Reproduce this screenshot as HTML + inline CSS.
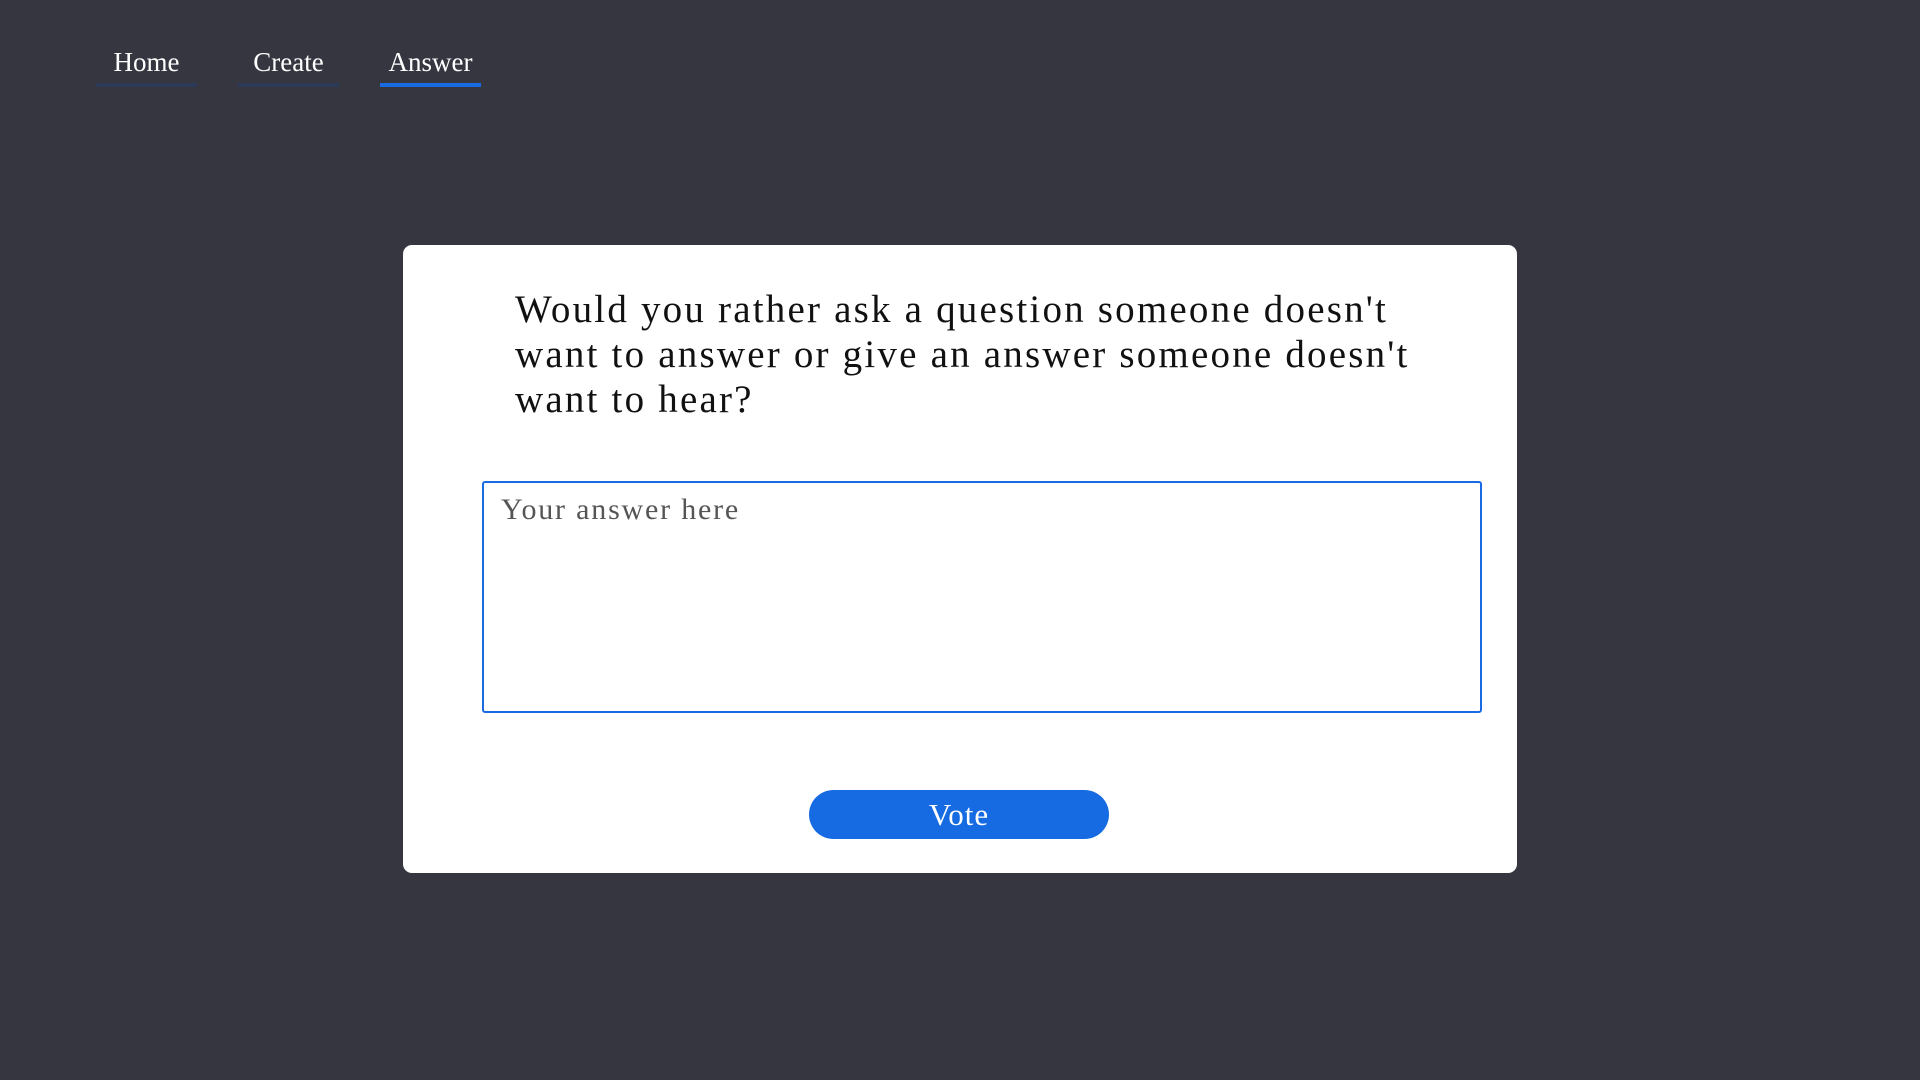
<!DOCTYPE html>
<html><head><meta charset="utf-8"><style>
html,body{margin:0;padding:0;width:1920px;height:1080px;background:#363641;overflow:hidden;font-family:"Liberation Serif",serif}
.nav a{position:absolute;top:47px;color:#fff;font-size:27px;text-align:center;width:101px;height:40px;box-sizing:border-box;border-bottom:4px solid #2c3a58;text-decoration:none}
.nav a.on{border-bottom-color:#1a6be2}
.card{position:absolute;left:403px;top:245px;width:1114px;height:628px;background:#fff;border-radius:9px}
.q{position:absolute;left:112px;top:42px;font-size:39px;line-height:45px;color:#111;letter-spacing:2.2px;white-space:nowrap}
.ta{position:absolute;left:79px;top:236px;width:1000px;height:232px;box-sizing:border-box;border:2px solid #1a6be2;border-radius:3px}
.ph{position:absolute;left:17px;top:10px;font-size:30px;color:#555;letter-spacing:1.8px}
.btn{position:absolute;left:406px;top:545px;width:300px;height:49px;border-radius:25px;background:#166be2;color:#fff;font-size:31px;text-align:center;line-height:49px;letter-spacing:1px}
</style></head><body>
<div class="nav">
<a style="left:96px">Home</a>
<a style="left:238px">Create</a>
<a class="on" style="left:380px">Answer</a>
</div>
<div class="card">
<div class="q">Would you rather ask a question someone doesn't<br>want to answer or give an answer someone doesn't<br>want to hear?</div>
<div class="ta"><div class="ph">Your answer here</div></div>
<div class="btn">Vote</div>
</div>
</body></html>
